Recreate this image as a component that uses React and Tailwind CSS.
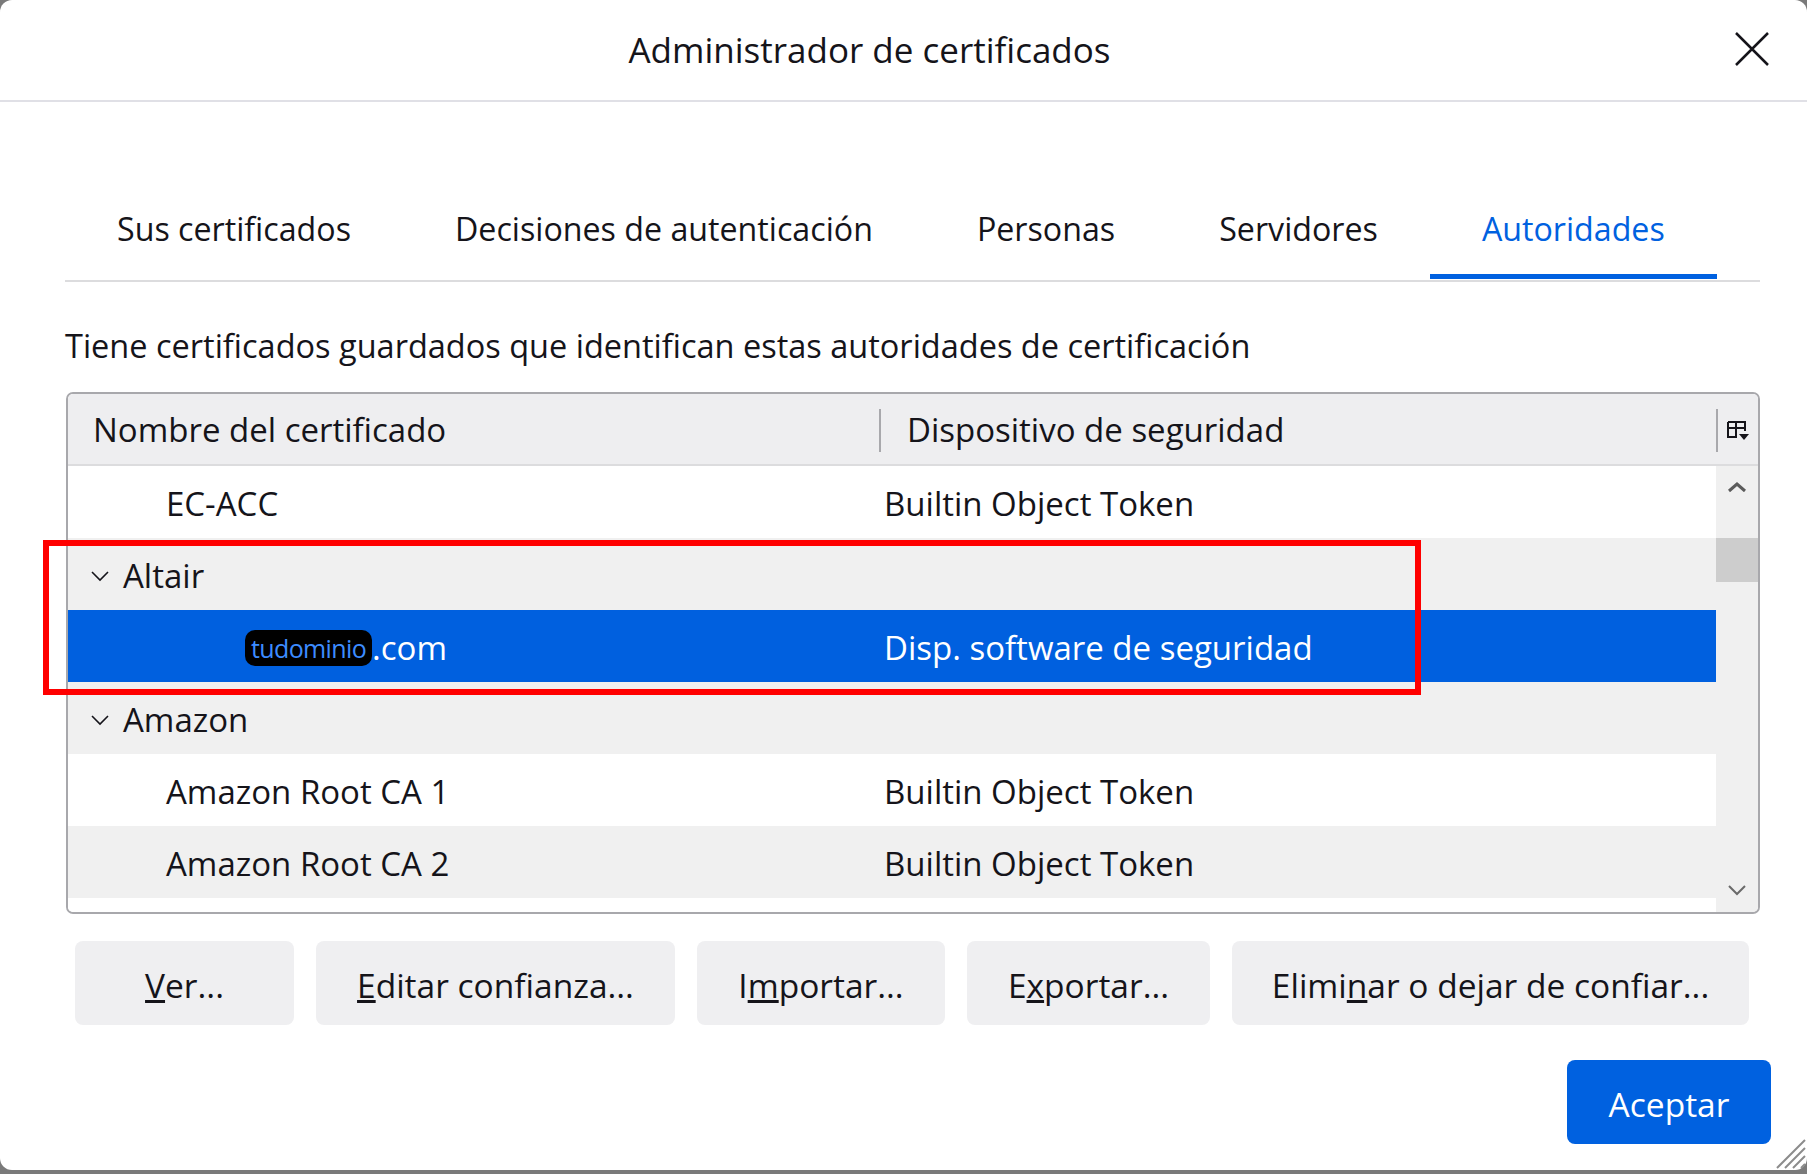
import React from "react";

const rows = [
  { kind: "leaf", name: "EC-ACC", device: "Builtin Object Token" },
  { kind: "group", name: "Altair" },
  { kind: "selected", device: "Disp. software de seguridad" },
  { kind: "group", name: "Amazon" },
  { kind: "leaf", name: "Amazon Root CA 1", device: "Builtin Object Token" },
  { kind: "leaf", name: "Amazon Root CA 2", device: "Builtin Object Token" },
];

const tabs = ["Sus certificados", "Decisiones de autenticación", "Personas", "Servidores", "Autoridades"];

function Chevron({ up, className, width = "2" }) {
  return (
    <svg width="20" height="12" viewBox="0 0 20 12" className={className}>
      <polyline
        points={up ? "2,10 10,3 18,10" : "2,2 10,10 18,2"}
        fill="none"
        stroke="currentColor"
        strokeWidth={width}
      />
    </svg>
  );
}

function ColumnPicker() {
  return (
    <svg width="26" height="24" viewBox="0 0 26 24" className="text-[#15141a]">
      <path d="M3 4h17v9M3 4v15h9M3 10h17M11 4v15" fill="none" stroke="currentColor" strokeWidth="2" />
      <path d="M14 16h10l-5 6z" fill="currentColor" />
    </svg>
  );
}

function Row({ row, index }) {
  const stripe = index % 2 === 1 ? "bg-[#f0f0f0]" : "bg-white";
  if (row.kind === "selected") {
    return (
      <div className="h-[72px] flex items-center pt-[3px] bg-[#0060df] text-white">
        <div className="w-[816px] flex items-center pl-[177px]">
          <span className="h-[36px] px-[6px] rounded-[10px] bg-black text-[#3d8cff] text-[25px] leading-[36px] tracking-tight">
            tudominio
          </span>
          <span>.com</span>
        </div>
        <div>{row.device}</div>
      </div>
    );
  }
  if (row.kind === "group") {
    return (
      <div className={`h-[72px] flex items-center pt-[3px] ${stripe}`}>
        <Chevron width="1.6" className="ml-[22px] mr-[13px] text-[#15141a]" />
        <span>{row.name}</span>
      </div>
    );
  }
  return (
    <div className={`h-[72px] flex items-center pt-[3px] ${stripe}`}>
      <div className="w-[816px] pl-[98px]">{row.name}</div>
      <div>{row.device}</div>
    </div>
  );
}

export default function App() {
  return (
    <div className="w-[1807px] h-[1174px] bg-[#7a7a7a] overflow-hidden font-['Open_Sans',sans-serif] text-[#15141a] text-[33px] leading-[44px]">
      <div className="relative h-[1170px] bg-white rounded-[12px] flex flex-col">
        {/* title bar */}
        <div className="relative h-[102px] pr-[68px] flex items-center justify-center border-b-2 border-[#e0e0e6]">
          <span className="text-[35px] font-medium">Administrador de certificados</span>
          <svg width="36" height="36" viewBox="0 0 36 36" className="absolute right-[37px] top-[31px]">
            <path d="M2 2L34 34M34 2L2 34" stroke="#15141a" strokeWidth="2.5" />
          </svg>
        </div>

        <div className="pl-[65px] pr-[47px] flex flex-col">
          {/* tabs */}
          <div className="mt-[88px] flex border-b-2 border-[#dcdcde] text-[32.2px]">
            {tabs.map((t, i) => {
              const active = i === tabs.length - 1;
              return (
                <div key={t} className="relative h-[90px] px-[52px] pt-[17px]">
                  <span className={active ? "text-[#0061e0]" : ""}>{t}</span>
                  {active && <div className="absolute left-0 right-0 bottom-[1px] h-[5px] bg-[#0061e0]" />}
                </div>
              );
            })}
          </div>

          <p className="mt-[42px] text-[32.5px]">
            Tiene certificados guardados que identifican estas autoridades de certificación
          </p>

          {/* tree */}
          <div className="mt-[24px] ml-[1px] h-[522px] border-2 border-[#a8a8ac] rounded-[7px] overflow-hidden flex flex-col">
            <div className="h-[72px] shrink-0 flex items-center pt-[2px] bg-[#eeeef0] border-b-2 border-[#dcdcde]">
              <div className="w-[811px] pl-[25px]">Nombre del certificado</div>
              <div className="w-[2px] h-[43px] bg-[#a8a8ac]" />
              <div className="flex-1 pl-[26px]">Dispositivo de seguridad</div>
              <div className="w-[2px] h-[43px] bg-[#a8a8ac]" />
              <div className="w-[40px] flex justify-center">
                <ColumnPicker />
              </div>
            </div>
            <div className="flex flex-1 overflow-hidden">
              <div className="flex-1 flex flex-col">
                {rows.map((r, i) => (
                  <Row key={i} row={r} index={i} />
                ))}
                <div className="flex-1 bg-white" />
              </div>
              <div className="w-[42px] bg-[#f0f0f0] flex flex-col items-center">
                <Chevron up width="3" className="mt-[15px] text-[#5b5b5b]" />
                <div className="mt-[45px] w-full h-[44px] bg-[#cdcdcd]" />
                <div className="flex-1" />
                <Chevron width="2" className="mb-[16px] text-[#6a6a6a]" />
              </div>
            </div>
          </div>

          {/* action buttons */}
          <div className="mt-[27px] ml-[10px] flex gap-[22px] text-[33.5px]">
            <button className="w-[219px] h-[84px] pt-[3px] rounded-[8px] bg-[#efeff1]">
              <u>V</u>er...
            </button>
            <button className="w-[359px] h-[84px] pt-[3px] rounded-[8px] bg-[#efeff1]">
              <u>E</u>ditar confianza...
            </button>
            <button className="w-[248px] h-[84px] pt-[3px] rounded-[8px] bg-[#efeff1]">
              I<u>m</u>portar...
            </button>
            <button className="w-[243px] h-[84px] pt-[3px] rounded-[8px] bg-[#efeff1]">
              E<u>x</u>portar...
            </button>
            <button className="w-[517px] h-[84px] pt-[3px] rounded-[8px] bg-[#efeff1]">
              Elimi<u>n</u>ar o dejar de confiar...
            </button>
          </div>
        </div>

        <div className="mt-[35px] pr-[36px] flex justify-end">
          <button className="w-[204px] h-[84px] pt-[3px] rounded-[8px] bg-[#0061e0] text-white text-[33.5px]">
            Aceptar
          </button>
        </div>

        {/* resize grip */}
        <svg width="36" height="36" viewBox="0 0 36 36" className="absolute right-0 bottom-0">
          <path d="M34 6L6 34M34 14L14 34M34 22L22 34M34 30L30 34" stroke="#8c8c8c" strokeWidth="2" />
        </svg>

        {/* annotation */}
        <div className="absolute left-[43px] top-[540px] w-[1378px] h-[155px] border-[6px] border-[#ff0000]" />
      </div>
    </div>
  );
}
